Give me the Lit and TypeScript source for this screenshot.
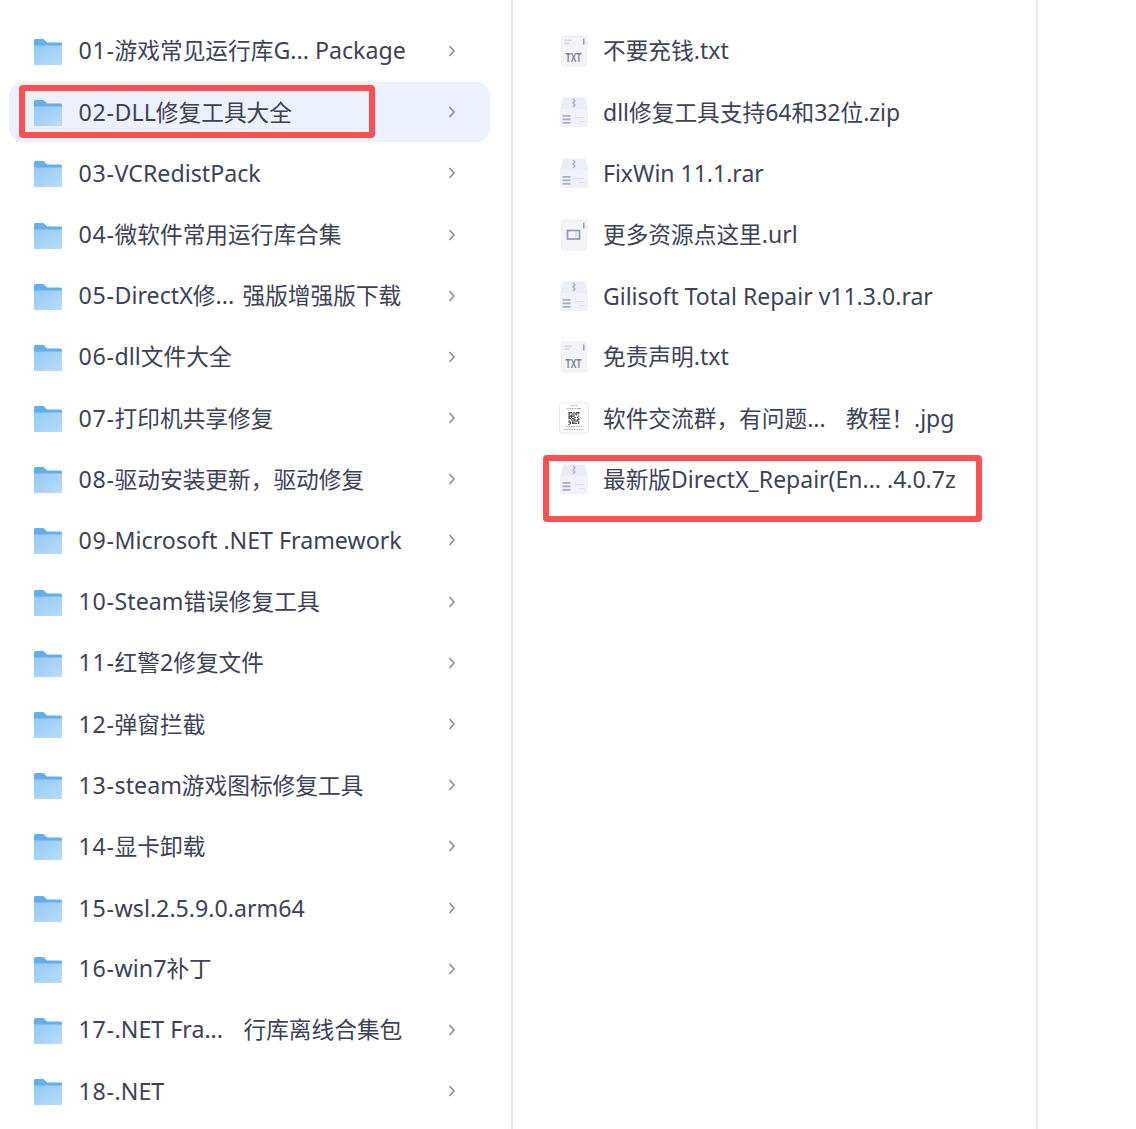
import { LitElement, html, css, svg } from "lit";
import { customElement } from "lit/decorators.js";

const folders = [
  "01-游戏常见运行库G... Package", "02-DLL修复工具大全", "03-VCRedistPack", "04-微软件常用运行库合集",
  "05-DirectX修...\u200a 强版增强版下载", "06-dll文件大全", "07-打印机共享修复", "08-驱动安装更新，驱动修复",
  "09-Microsoft .NET Framework", "10-Steam错误修复工具", "11-红警2修复文件", "12-弹窗拦截",
  "13-steam游戏图标修复工具", "14-显卡卸载", "15-wsl.2.5.9.0.arm64", "16-win7补丁",
  "17-.NET Fra...   \u200a行库离线合集包", "18-.NET",
];
const files: [string, string][] = [
  ["txt", "不要充钱.txt"], ["zip", "dll修复工具支持64和32位.zip"], ["zip", "FixWin 11.1.rar"],
  ["url", "更多资源点这里.url"], ["zip", "Gilisoft Total Repair v11.3.0.rar"], ["txt", "免责声明.txt"],
  ["jpg", "软件交流群，有问题...   \u200a教程！.jpg"], ["zip", "最新版DirectX_Repair(En... .4.0.7z"],
];

const runs = (s: string) =>
  (s.match(/[\u3000-\u9fff\uff00-\uffef]+|[^\u3000-\u9fff\uff00-\uffef]+/g) ?? []).map((r) =>
    /[\u3000-\u9fff\uff00-\uffef]/.test(r) ? html`<span class="cjk">${r}</span>` : r
  );

const folderName = (s: string) => html`<span class="pre">${s.slice(0, 3)}</span>${runs(s.slice(3))}`;

const folderIcon = svg`<svg class="ficon" width="30" height="28" viewBox="0 0 30 28">
  <defs><linearGradient id="fg" x1="0" y1="0" x2="1" y2="1"><stop offset="0" stop-color="#93caf6"/><stop offset="1" stop-color="#b9dcfa"/></linearGradient></defs>
  <path d="M1 2.500Q1 1 2.500 1H10.500L14 4.500H27.500Q29 4.500 29 6V25.500Q29 27 27.500 27H2.500Q1 27 1 25.500Z" fill="#62aeee"/>
  <path d="M1 7.500H29V25.500Q29 27 27.500 27H2.500Q1 27 1 25.500Z" fill="url(#fg)"/>
</svg>`;

// Small QR-like dot field for the jpg thumbnail.
const qrCells = "11101011110010110110101010011111000110100101011011000100101101110010111011011000101011110110".split("");
const qr = qrCells.map((c, i) =>
  c === "1" ? svg`<rect x=${9.500 + (i % 9) * 1.200} y=${10 + Math.floor(i / 9) * 1.200} width="1.200" height="1.200"/>` : null
);

function fileIcon(kind: string) {
  if (kind === "txt") return svg`<svg width="28" height="32" viewBox="0 0 28 32">
    <path d="M1.500 2Q1.500 1 2.500 1H26Q27 1 27 2V30Q27 31 26 31H2.500Q1.500 31 1.500 30Z" fill="#f3f4f8" stroke="#e6e8f0" stroke-width=".6"/>
    <rect x="4.500" y="4.500" width="7" height="1.600" fill="#d6d9e3"/><rect x="4.500" y="7.500" width="5" height="1.600" fill="#d6d9e3"/>
    <rect x="23" y="3.500" width="1.600" height="6" fill="#9aa3bd"/>
    <text x="13.500" y="27" text-anchor="middle" class="tx" textLength="16" lengthAdjust="spacingAndGlyphs">TXT</text></svg>`;
  if (kind === "url") return svg`<svg width="28" height="32" viewBox="0 0 28 32">
    <path d="M1.500 2Q1.500 1 2.500 1H26Q27 1 27 2V30Q27 31 26 31H2.500Q1.500 31 1.500 30Z" fill="#f3f4f8" stroke="#e6e8f0" stroke-width=".6"/>
    <rect x="23" y="3.500" width="1.600" height="6" fill="#9aa3bd"/>
    <rect x="7.500" y="11.500" width="12" height="8.500" fill="none" stroke="#8e9bbd" stroke-width="1.700"/>
    <path d="M16 11.500v8.500" stroke="#bcc5da" stroke-width="1"/></svg>`;
  if (kind === "jpg") return svg`<svg width="30" height="32" viewBox="0 0 30 32">
    <rect x="0.500" y="1" width="29" height="30" rx="3" fill="#fff" stroke="#e8e8ee"/>
    <path d="M12 3.500h6M8 6.500h14M7 24.500h16M5 27.500h20" stroke="#a9a9ae" stroke-width="1" stroke-dasharray="1.500 1"/>
    <path d="M18 6.500h3" stroke="#e08a8a" stroke-width="1"/>
    <g fill="#2c2c30">${qr}</g></svg>`;
  return svg`<svg width="30" height="32" viewBox="0 0 30 32">
    <path d="M4 1.500H26L29 13V29Q29 31 27 31H3Q1 31 1 29V13Z" fill="#eaeefb"/>
    <path d="M1 13H29V29Q29 31 27 31H3Q1 31 1 29Z" fill="#f1f3fc"/>
    <path d="M14 3l2 2-2 2 2 2-2 2" fill="none" stroke="#a3aecc" stroke-width="1.300"/>
    <rect x="3.500" y="19" width="8" height="1.700" fill="#a3aecc"/><rect x="3.500" y="22.500" width="8" height="1.700" fill="#a3aecc"/><rect x="3.500" y="26" width="8" height="1.700" fill="#a3aecc"/>
    <rect x="15" y="21" width="10" height="1.200" fill="#dde1ee"/><rect x="20" y="25" width="6" height="1.200" fill="#dde1ee"/></svg>`;
}

@customElement("app-root")
export class AppRoot extends LitElement {
  static styles = css`
    :host { display: block; width: 1136px; height: 1129px; overflow: hidden; background: #fff; position: relative;
      font-family: "Noto Sans", "Noto Sans CJK SC", sans-serif; color: #3d4257; }
    .cols { display: grid; grid-template-columns: 513px 525px; height: 1129px; }
    .col { padding-top: 20.400px; border-right: 2px solid #e9e9ec; box-sizing: border-box; display: grid; grid-auto-rows: 61.200px; align-content: start; height: 1129px; }
    .left { padding-left: 9px; padding-right: 21px; }
    .right { padding-left: 46px; padding-right: 20px; }
    .row { display: flex; align-items: center; white-space: pre; font-size: 23px; line-height: 32px; }
    .frow { padding-left: 24px; padding-right: 34px; border-radius: 14px; height: 60px; align-self: center; }
    .frow.sel { background: #edf1fe; }
    .ficon { flex: none; margin-right: 15.500px; margin-top: 2px; }
    .name { flex: 1; transform: translateY(-0.500px); }
    .pre { letter-spacing: 0.700px; }
    .cjk { font-size: 22.700px; }
    .left .name { font-size: 23.200px; }
    .chev { flex: none; }
    .ic { flex: none; width: 30px; margin-right: 14px; display: flex; justify-content: center; }
    .tx { font: 700 12px "Liberation Sans", sans-serif; fill: #7d8296; }
    .mark { position: absolute; border: 6px solid #fd5050; border-radius: 4px; box-sizing: border-box; pointer-events: none; }
    .m1 { left: 19px; top: 85px; width: 356px; height: 53px; }
    .m2 { left: 543px; top: 455px; width: 439px; height: 67px; }
  `;

  render() {
    return html`
      <div class="cols">
        <div class="col left">
          ${folders.map((f, i) => html`<div class="row frow ${i === 1 ? "sel" : ""}">
            ${folderIcon}<span class="name">${folderName(f)}</span>
            <svg class="chev" width="8" height="14" viewBox="0 0 8 14"><path d="M1.500 2l4.500 5-4.500 5" fill="none" stroke="#868a9a" stroke-width="1.500"/></svg>
          </div>`)}
        </div>
        <div class="col right">
          ${files.map(([k, n]) => html`<div class="row"><span class="ic">${fileIcon(k)}</span><span class="name">${runs(n)}</span></div>`)}
        </div>
      </div>
      <div class="mark m1"></div>
      <div class="mark m2"></div>
    `;
  }
}
